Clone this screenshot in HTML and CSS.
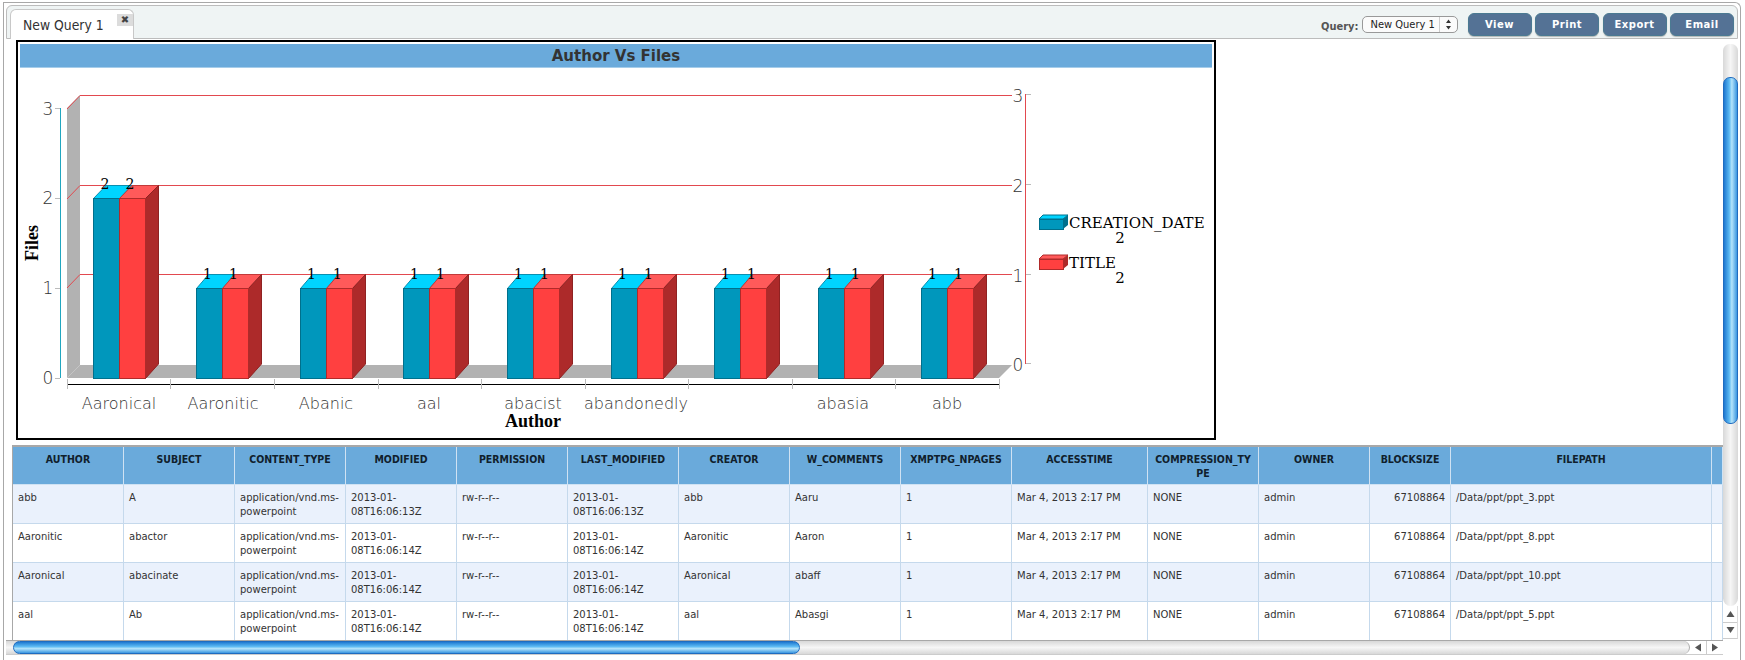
FILE: index.html
```html
<!DOCTYPE html>
<html lang="en">
<head>
  <meta charset="UTF-8" />
  <title>New Query 1</title>
  <link rel="stylesheet" href="styles.css">
</head>
<body>

<div class="frame">
  <div class="tabbar">
    <div class="tab">
      <span class="tab-name">New Query 1</span>
      <span class="tab-close">✖</span>
    </div>
    <div class="tools">
      <span class="tools-label">Query:</span>
      <div class="select">
        <span class="select-value">New Query 1</span>
        <span class="select-arrows">
          <svg width="7" height="11" viewBox="0 0 7 11"><path d="M3.5 0.5 L6 4 L1 4 Z M1 7 L6 7 L3.5 10.5 Z" fill="#333"/></svg>
        </span>
      </div>
      <div class="btns">
        <button class="btn">View</button>
        <button class="btn">Print</button>
        <button class="btn">Export</button>
        <button class="btn">Email</button>
      </div>
    </div>
  </div>

  <div class="content">
    <div class="main">
      <div class="chart">
        <div class="chart-title">Author Vs Files</div>
        <svg class="chart-svg" width="1196" height="370" viewBox="18 68 1196 370">
          <defs>
            <g id="bar1">
              <path d="M0 288.5 L12 274.5 L38 274.5 L26 288.5 Z" fill="#00d4ff" stroke="#0a8fb0"/>
              <path d="M26 288.5 L38 274.5 L65 274.5 L52 288.5 Z" fill="#ff5a5a" stroke="#c23a3a"/>
              <path d="M52 288.5 L65 274.5 L65 364 L52 378.5 Z" fill="#ad2a2a" stroke="#8f2222"/>
              <rect x="0" y="288.5" width="26" height="90" fill="#0097bc" stroke="#00708c"/>
              <rect x="26" y="288.5" width="26" height="90" fill="#ff4040" stroke="#b02a2a"/>
              <text class="val" x="11" y="279">1</text>
              <text class="val" x="37" y="279">1</text>
            </g>
          </defs>

          <!-- back wall and floor -->
          <path d="M67 108 L80 95 L80 365 L67 378 Z" fill="#b2b2b2"/>
          <path d="M67 378 L80 365 L1012 365 L999 378 Z" fill="#b2b2b2"/>

          <!-- grid -->
          <path class="grid" d="M67 109 L80 95.5 L1012 95.5 M67 199 L80 185.5 L1012 185.5 M67 288 L80 274.5 L1012 274.5"/>

          <!-- left axis -->
          <path class="axis-left" d="M60.5 108 L60.5 378"/>
          <path class="tick" d="M55 108.5 H60 M55 198.5 H60 M55 288.5 H60 M55 378.5 H60"/>
          <text class="num" x="48" y="115">3</text>
          <text class="num" x="48" y="204">2</text>
          <text class="num" x="48" y="294">1</text>
          <text class="num" x="48" y="384">0</text>
          <text class="axis-name" transform="translate(38 243) rotate(-90)">Files</text>

          <!-- right axis -->
          <path class="axis-right" d="M1025.5 94 L1025.5 364"/>
          <path class="tick" d="M1026 94.5 H1031 M1026 184.5 H1031 M1026 274.5 H1031 M1026 363.5 H1031"/>
          <text class="num" x="1018" y="102">3</text>
          <text class="num" x="1018" y="192">2</text>
          <text class="num" x="1018" y="282">1</text>
          <text class="num" x="1018" y="371">0</text>

          <!-- bars -->
          <g>
            <path d="M93.5 198.5 L106 185.5 L132 185.5 L119.5 198.5 Z" fill="#00d4ff" stroke="#0a8fb0"/>
            <path d="M119.5 198.5 L132 185.5 L158.5 185.5 L145.5 198.5 Z" fill="#ff5a5a" stroke="#c23a3a"/>
            <path d="M145.5 198.5 L158.5 185.5 L158.5 364 L145.5 378.5 Z" fill="#ad2a2a" stroke="#8f2222"/>
            <rect x="93.5" y="198.5" width="26" height="180" fill="#0097bc" stroke="#00708c"/>
            <rect x="119.5" y="198.5" width="26" height="180" fill="#ff4040" stroke="#b02a2a"/>
            <text class="val" x="105" y="189">2</text>
            <text class="val" x="130" y="189">2</text>
          </g>
          <use href="#bar1" x="196.5"/>
          <use href="#bar1" x="300.5"/>
          <use href="#bar1" x="403.5"/>
          <use href="#bar1" x="507.5"/>
          <use href="#bar1" x="611.5"/>
          <use href="#bar1" x="714.5"/>
          <use href="#bar1" x="818.5"/>
          <use href="#bar1" x="921.5"/>

          <!-- x axis -->
          <path class="axis-x" d="M67 384.5 H999"/>
          <path class="tick" d="M67.5 379 V389 M170.5 379 V389 M274.5 379 V389 M378.5 379 V389 M481.5 379 V389 M585.5 379 V389 M688.5 379 V389 M792.5 379 V389 M895.5 379 V389 M999.5 379 V389"/>
          <text class="cat" x="119" y="409">Aaronical</text>
          <text class="cat" x="223" y="409">Aaronitic</text>
          <text class="cat" x="326" y="409">Abanic</text>
          <text class="cat" x="429" y="409">aal</text>
          <text class="cat" x="533" y="409">abacist</text>
          <text class="cat" x="636" y="409">abandonedly</text>
          <text class="cat" x="843" y="409">abasia</text>
          <text class="cat" x="947" y="409">abb</text>
          <text class="axis-name" x="533" y="427">Author</text>

          <!-- legend -->
          <g>
            <path d="M1039 219 L1043 215 L1068 215 L1063 219 Z" fill="#00d4ff" stroke="#00708c"/>
            <path d="M1063 219 L1068 215 L1068 225 L1063 229 Z" fill="#00708c"/>
            <rect x="1039.5" y="219.5" width="24" height="10" fill="#0097bc" stroke="#00708c"/>
            <text class="legend" x="1069" y="228">CREATION_DATE</text>
            <text class="legend-num" x="1120" y="243">2</text>
            <path d="M1039 259 L1043 255 L1068 255 L1063 259 Z" fill="#ff5a5a" stroke="#b02a2a"/>
            <path d="M1063 259 L1068 255 L1068 265 L1063 269 Z" fill="#ad2a2a"/>
            <rect x="1039.5" y="259.5" width="24" height="10" fill="#ff4040" stroke="#b02a2a"/>
            <text class="legend" x="1069" y="268">TITLE</text>
            <text class="legend-num" x="1120" y="283">2</text>
          </g>
        </svg>
      </div>

      <table class="grid-table">
        <colgroup>
          <col class="w111"><col class="w111"><col class="w111"><col class="w111"><col class="w111">
          <col class="w111"><col class="w111"><col class="w111"><col class="w111">
          <col class="w136"><col class="w111"><col class="w111"><col class="w81"><col class="w261"><col>
        </colgroup>
        <thead>
          <tr>
            <th>AUTHOR</th><th>SUBJECT</th><th>CONTENT_TYPE</th><th>MODIFIED</th><th>PERMISSION</th>
            <th>LAST_MODIFIED</th><th>CREATOR</th><th>W_COMMENTS</th><th>XMPTPG_NPAGES</th><th>ACCESSTIME</th>
            <th>COMPRESSION_TYPE</th><th>OWNER</th><th>BLOCKSIZE</th><th>FILEPATH</th><th></th>
          </tr>
        </thead>
        <tbody>
          <tr>
            <td>abb</td><td>A</td><td>application/vnd.ms-powerpoint</td><td>2013-01-08T16:06:13Z</td><td>rw-r--r--</td>
            <td>2013-01-08T16:06:13Z</td><td>abb</td><td>Aaru</td><td>1</td><td>Mar 4, 2013 2:17 PM</td>
            <td>NONE</td><td>admin</td><td class="num-cell">67108864</td><td>/Data/ppt/ppt_3.ppt</td><td></td>
          </tr>
          <tr>
            <td>Aaronitic</td><td>abactor</td><td>application/vnd.ms-powerpoint</td><td>2013-01-08T16:06:14Z</td><td>rw-r--r--</td>
            <td>2013-01-08T16:06:14Z</td><td>Aaronitic</td><td>Aaron</td><td>1</td><td>Mar 4, 2013 2:17 PM</td>
            <td>NONE</td><td>admin</td><td class="num-cell">67108864</td><td>/Data/ppt/ppt_8.ppt</td><td></td>
          </tr>
          <tr>
            <td>Aaronical</td><td>abacinate</td><td>application/vnd.ms-powerpoint</td><td>2013-01-08T16:06:14Z</td><td>rw-r--r--</td>
            <td>2013-01-08T16:06:14Z</td><td>Aaronical</td><td>abaff</td><td>1</td><td>Mar 4, 2013 2:17 PM</td>
            <td>NONE</td><td>admin</td><td class="num-cell">67108864</td><td>/Data/ppt/ppt_10.ppt</td><td></td>
          </tr>
          <tr>
            <td>aal</td><td>Ab</td><td>application/vnd.ms-powerpoint</td><td>2013-01-08T16:06:14Z</td><td>rw-r--r--</td>
            <td>2013-01-08T16:06:14Z</td><td>aal</td><td>Abasgi</td><td>1</td><td>Mar 4, 2013 2:17 PM</td>
            <td>NONE</td><td>admin</td><td class="num-cell">67108864</td><td>/Data/ppt/ppt_5.ppt</td><td></td>
          </tr>
        </tbody>
      </table>

      <div class="hscroll">
        <div class="hscroll-track"><div class="hscroll-thumb"></div></div>
        <div class="arrow-pair">
          <span class="arrow-cell"><svg width="8" height="9" viewBox="0 0 8 9"><path d="M7 0.5 V8.5 L1 4.5 Z" fill="#555"/></svg></span>
          <span class="arrow-cell"><svg width="8" height="9" viewBox="0 0 8 9"><path d="M1 0.5 V8.5 L7 4.5 Z" fill="#555"/></svg></span>
        </div>
      </div>
    </div>

    <div class="vscroll">
      <div class="vscroll-track"><div class="vscroll-thumb"></div></div>
      <div class="arrow-stack">
        <span class="arrow-cell"><svg width="9" height="8" viewBox="0 0 9 8"><path d="M0.5 7 H8.5 L4.5 1 Z" fill="#555"/></svg></span>
        <span class="arrow-cell"><svg width="9" height="8" viewBox="0 0 9 8"><path d="M0.5 1 H8.5 L4.5 7 Z" fill="#555"/></svg></span>
      </div>
    </div>
  </div>
</div>

</body>
</html>
```

FILE: styles.css
```css
html, body {
  margin: 0;
  height: 660px;
  overflow: hidden;
  background: white;
}
body {
  font-family: "DejaVu Sans", sans-serif;
  color: #333;
}
.frame {
  margin: 2px 4px 0 3px;
  height: 658px;
  border-top: 1px solid #a8a8a8;
  border-left: 1px solid #a8a8a8;
  border-right: 1px solid #a8a8a8;
  border-top-right-radius: 6px;
  box-sizing: border-box;
  padding: 2px 0 0 2px;
}

/* tab strip */
.tabbar {
  display: flex;
  justify-content: space-between;
  height: 34px;
  box-sizing: border-box;
  background: #eff4f4;
  border: 1px solid #bcbcbc;
  border-radius: 6px 6px 0 0;
  padding-left: 3px;
  margin-right: 2px;
}
.tab {
  display: flex;
  justify-content: space-between;
  align-items: flex-start;
  width: 124px;
  height: 30px;
  margin-top: 3px;
  box-sizing: border-box;
  background: white;
  border: 1px solid #c8c8c8;
  border-bottom: none;
  border-radius: 6px 6px 0 0;
}
.tab-name {
  font-family: "DejaVu Sans Condensed", "DejaVu Sans", sans-serif;
  font-size: 13.8px;
  padding: 7px 0 0 12px;
  color: #333;
}
.tab-close {
  width: 16px;
  height: 12px;
  margin-top: 4px;
  background: #dcdcdc;
  color: #444;
  font-size: 10px;
  line-height: 12px;
  text-align: center;
}
.tools {
  display: flex;
  align-items: flex-start;
  padding-right: 3px;
}
.tools-label {
  font-family: "DejaVu Sans Condensed", "DejaVu Sans", sans-serif;
  font-size: 11px;
  font-weight: bold;
  color: #555;
  margin-top: 14px;
}
.select {
  display: flex;
  width: 96px;
  height: 17px;
  margin: 10px 10px 0 3px;
  box-sizing: border-box;
  background: #fbfbfb;
  border: 1px solid #999;
  border-radius: 5px;
}
.select-value {
  flex: 1;
  font-family: "DejaVu Sans Condensed", "DejaVu Sans", sans-serif;
  font-size: 11px;
  line-height: 15px;
  padding-left: 8px;
  color: #222;
}
.select-arrows {
  display: flex;
  align-items: center;
  justify-content: center;
  width: 17px;
  border-left: 1px solid #ccc;
}
.btns {
  display: flex;
  gap: 3.5px;
  margin-top: 7px;
}
.btn {
  width: 64px;
  height: 23px;
  padding: 0;
  background: #547295;
  border: 1px solid #4b7a92;
  border-radius: 6px;
  box-shadow: 0 1px 1px rgba(0,0,0,0.25);
  color: white;
  font-family: "DejaVu Sans", sans-serif;
  font-size: 10px;
  font-weight: bold;
  letter-spacing: 0.5px;
}

/* main area */
.content {
  display: flex;
  height: 616px;
}
.main {
  width: 1717px;
  padding-left: 6px;
  box-sizing: border-box;
}
.chart {
  width: 1200px;
  height: 400px;
  margin: 1px 0 0 4px;
  box-sizing: border-box;
  background: white;
  border: 2px solid black;
  padding: 2px;
}
.chart-title {
  height: 24px;
  background: #6aaadb;
  border-bottom: 1px solid #a6cdea;
  box-sizing: border-box;
  color: #333;
  font-size: 15px;
  font-weight: bold;
  line-height: 25px;
  text-align: center;
}
.chart-svg {
  display: block;
  margin: 0 0 0 -2px;
}
.grid {
  fill: none;
  stroke: #e2494f;
  stroke-width: 1;
}
.axis-left {
  stroke: #1fa6c0;
  stroke-width: 1;
}
.axis-right {
  stroke: #e2494f;
  stroke-width: 1;
}
.axis-x {
  stroke: black;
  stroke-width: 1;
}
.tick {
  fill: none;
  stroke: #bbb;
  stroke-width: 1;
}
.num {
  font-size: 17px;
  font-weight: 200;
  fill: #333;
  text-anchor: middle;
}
.val {
  font-family: "DejaVu Serif", serif;
  font-size: 14px;
  fill: black;
  text-anchor: middle;
}
.cat {
  font-size: 16px;
  font-weight: 200;
  fill: #333;
  text-anchor: middle;
}
.axis-name {
  font-family: "Liberation Serif", serif;
  font-size: 18px;
  font-weight: bold;
  fill: black;
  text-anchor: middle;
}
.legend {
  font-family: "DejaVu Serif", serif;
  font-size: 15px;
  fill: black;
}
.legend-num {
  font-family: "DejaVu Serif", serif;
  font-size: 15px;
  fill: black;
  text-anchor: middle;
}

/* data table */
.grid-table {
  width: 1711px;
  margin-top: 5px;
  table-layout: fixed;
  border-collapse: separate;
  border-spacing: 0;
  border-top: 2px solid #a8a8a8;
  border-left: 1px solid #a8a8a8;
}
.w81 { width: 81px; }
.w111 { width: 111px; }
.w136 { width: 136px; }
.w261 { width: 261px; }
.grid-table th {
  height: 38px;
  box-sizing: border-box;
  padding: 5px 4px 0;
  background: #6aaadb;
  border-right: 1px solid #cfe2f3;
  border-bottom: 1px solid #cfe2f3;
  color: #10202c;
  font-family: "DejaVu Sans Condensed", "DejaVu Sans", sans-serif;
  font-size: 10.5px;
  font-weight: bold;
  line-height: 14px;
  text-align: center;
  vertical-align: top;
  word-break: break-all;
}
.grid-table td {
  height: 39px;
  box-sizing: border-box;
  padding: 6px 2px 0 5px;
  border-right: 1px solid #c5d9ec;
  border-bottom: 1px solid #c5d9ec;
  font-size: 10px;
  line-height: 14px;
  vertical-align: top;
  color: #333;
}
.grid-table tbody tr:nth-child(odd) td {
  background: #eaf1fc;
}
.grid-table tbody tr:last-child td {
  height: 38px;
  border-bottom: none;
}
.grid-table .num-cell {
  padding-right: 5px;
  text-align: right;
}

/* scrollbars */
.hscroll {
  display: flex;
  height: 15px;
  margin-left: -6px;
  border-top: 1px solid #a8a8a8;
  border-bottom: 1px solid #ccc;
  box-sizing: border-box;
}
.hscroll-track {
  flex: 1;
  padding-left: 7px;
  border-right: 1px solid #aaa;
  border-radius: 0 8px 8px 0;
  background: linear-gradient(#d8d8d8, #f6f6f6 50%, #d8d8d8);
}
.hscroll-thumb {
  width: 787px;
  height: 13px;
  box-sizing: border-box;
  border: 1px solid #1f6cc0;
  border-radius: 7px;
  background: linear-gradient(#1f78d0, #5ab8f2 40%, #b4e4fb 60%, #3a96e0);
}
.arrow-cell {
  flex: 1;
  display: flex;
  align-items: center;
  justify-content: center;
}
.arrow-cell + .arrow-cell {
  border-left: 1px solid #ccc;
}
.arrow-pair {
  display: flex;
  width: 33px;
}
.vscroll {
  display: flex;
  flex-direction: column;
  width: 15px;
}
.vscroll-track {
  height: 562px;
  margin-top: 5px;
  padding-top: 33px;
  box-sizing: border-box;
  border-radius: 7px 7px 8px 8px;
  background: linear-gradient(90deg, #d8d8d8, #f6f6f6 50%, #d8d8d8);
}
.vscroll-thumb {
  height: 347px;
  box-sizing: border-box;
  border: 1px solid #1f6cc0;
  border-radius: 7px;
  background: linear-gradient(90deg, #1f78d0, #5ab8f2 40%, #b4e4fb 60%, #3a96e0);
}
.arrow-stack {
  display: flex;
  flex-direction: column;
  height: 33px;
  box-sizing: border-box;
  border-bottom: 1px solid #ccc;
  border-right: 1px solid #ddd;
}
.arrow-stack .arrow-cell + .arrow-cell {
  border-left: none;
  border-top: 1px solid #ccc;
}
```
